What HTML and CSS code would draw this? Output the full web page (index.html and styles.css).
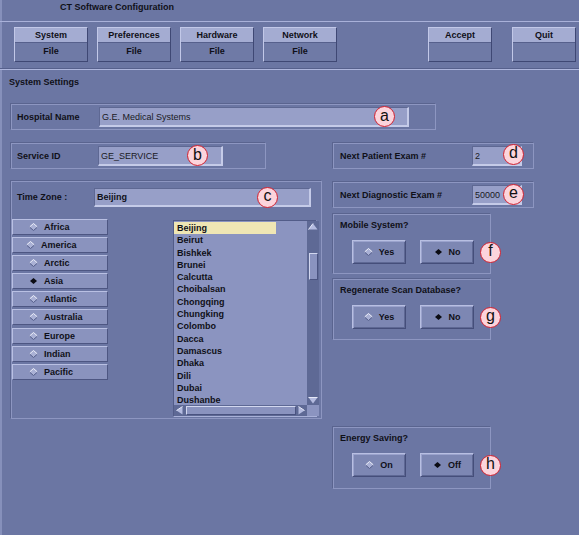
FILE: index.html
```html
<!DOCTYPE html>
<html>
<head>
<meta charset="utf-8">
<title>CT Software Configuration</title>
<link rel="stylesheet" href="styles.css">
</head>
<body>
<div class="screen">
  <div class="titlebar">CT Software Configuration</div>
  <div class="toolbar">
    <div class="tbtn"><div class="tb-top">System</div><div class="tb-bot">File</div></div>
    <div class="tbtn"><div class="tb-top">Preferences</div><div class="tb-bot">File</div></div>
    <div class="tbtn"><div class="tb-top">Hardware</div><div class="tb-bot">File</div></div>
    <div class="tbtn"><div class="tb-top">Network</div><div class="tb-bot">File</div></div>
    <div class="tbtn narrow accept"><div class="tb-top">Accept</div><div class="tb-bot"></div></div>
    <div class="tbtn narrow quit"><div class="tb-top">Quit</div><div class="tb-bot"></div></div>
  </div>

  <div class="content">
    <div class="section-title">System Settings</div>

    <div class="group hospital">
      <span class="label lbl-hosp">Hospital Name</span>
      <div class="field f-hosp">G.E. Medical Systems<span class="badge b-a">a</span></div>
    </div>

    <div class="columns">
      <div class="col-left">
        <div class="group service">
          <span class="label lbl-svc">Service ID</span>
          <div class="field f-svc">GE_SERVICE<span class="badge b-b">b</span></div>
        </div>

        <div class="group timezone">
          <div class="tz-head">
            <span class="label lbl-tz">Time Zone :</span>
            <div class="field f-tz">Beijing<span class="badge b-c">c</span></div>
          </div>
          <div class="tz-body">
            <div class="regions">
              <div class="rbtn"><svg class="dia" width="9" height="8" viewBox="0 0 9 8"><polygon points="4.5,0.5 8.5,4 4.5,7.5 0.5,4" fill="#aab1d5"/><polyline points="0.5,4 4.5,0.5 8.5,4" fill="none" stroke="#eef0fa"/><polyline points="0.5,4 4.5,7.5 8.5,4" fill="none" stroke="#555e8a"/></svg>Africa</div>
              <div class="rbtn am"><svg class="dia" width="9" height="8" viewBox="0 0 9 8"><polygon points="4.5,0.5 8.5,4 4.5,7.5 0.5,4" fill="#aab1d5"/><polyline points="0.5,4 4.5,0.5 8.5,4" fill="none" stroke="#eef0fa"/><polyline points="0.5,4 4.5,7.5 8.5,4" fill="none" stroke="#555e8a"/></svg>America</div>
              <div class="rbtn"><svg class="dia" width="9" height="8" viewBox="0 0 9 8"><polygon points="4.5,0.5 8.5,4 4.5,7.5 0.5,4" fill="#aab1d5"/><polyline points="0.5,4 4.5,0.5 8.5,4" fill="none" stroke="#eef0fa"/><polyline points="0.5,4 4.5,7.5 8.5,4" fill="none" stroke="#555e8a"/></svg>Arctic</div>
              <div class="rbtn"><svg class="dia" width="9" height="8" viewBox="0 0 9 8"><polygon points="4.5,1 8,4 4.5,7 1,4" fill="#0c0c14"/></svg>Asia</div>
              <div class="rbtn"><svg class="dia" width="9" height="8" viewBox="0 0 9 8"><polygon points="4.5,0.5 8.5,4 4.5,7.5 0.5,4" fill="#aab1d5"/><polyline points="0.5,4 4.5,0.5 8.5,4" fill="none" stroke="#eef0fa"/><polyline points="0.5,4 4.5,7.5 8.5,4" fill="none" stroke="#555e8a"/></svg>Atlantic</div>
              <div class="rbtn"><svg class="dia" width="9" height="8" viewBox="0 0 9 8"><polygon points="4.5,0.5 8.5,4 4.5,7.5 0.5,4" fill="#aab1d5"/><polyline points="0.5,4 4.5,0.5 8.5,4" fill="none" stroke="#eef0fa"/><polyline points="0.5,4 4.5,7.5 8.5,4" fill="none" stroke="#555e8a"/></svg>Australia</div>
              <div class="rbtn"><svg class="dia" width="9" height="8" viewBox="0 0 9 8"><polygon points="4.5,0.5 8.5,4 4.5,7.5 0.5,4" fill="#aab1d5"/><polyline points="0.5,4 4.5,0.5 8.5,4" fill="none" stroke="#eef0fa"/><polyline points="0.5,4 4.5,7.5 8.5,4" fill="none" stroke="#555e8a"/></svg>Europe</div>
              <div class="rbtn"><svg class="dia" width="9" height="8" viewBox="0 0 9 8"><polygon points="4.5,0.5 8.5,4 4.5,7.5 0.5,4" fill="#aab1d5"/><polyline points="0.5,4 4.5,0.5 8.5,4" fill="none" stroke="#eef0fa"/><polyline points="0.5,4 4.5,7.5 8.5,4" fill="none" stroke="#555e8a"/></svg>Indian</div>
              <div class="rbtn"><svg class="dia" width="9" height="8" viewBox="0 0 9 8"><polygon points="4.5,0.5 8.5,4 4.5,7.5 0.5,4" fill="#aab1d5"/><polyline points="0.5,4 4.5,0.5 8.5,4" fill="none" stroke="#eef0fa"/><polyline points="0.5,4 4.5,7.5 8.5,4" fill="none" stroke="#555e8a"/></svg>Pacific</div>
            </div>

            <div class="listbox">
              <ul class="items">
                <li class="sel">Beijing</li>
                <li>Beirut</li>
                <li>Bishkek</li>
                <li>Brunei</li>
                <li>Calcutta</li>
                <li>Choibalsan</li>
                <li>Chongqing</li>
                <li>Chungking</li>
                <li>Colombo</li>
                <li>Dacca</li>
                <li>Damascus</li>
                <li>Dhaka</li>
                <li>Dili</li>
                <li>Dubai</li>
                <li>Dushanbe</li>
              </ul>
              <div class="vscroll">
                <svg class="arr" width="10" height="7" viewBox="0 0 10 7"><polygon points="5,0.5 9.5,6.5 0.5,6.5" fill="#b4bbe0"/><polyline points="0.5,6.5 5,0.5" fill="none" stroke="#e6e9f7"/></svg>
                <div class="vthumb"></div>
                <svg class="arr arr-down" width="10" height="7" viewBox="0 0 10 7"><polygon points="0.5,0.5 9.5,0.5 5,6.5" fill="#b4bbe0"/><polyline points="0.5,0.5 9.5,0.5" fill="none" stroke="#e6e9f7"/></svg>
              </div>
              <div class="hscroll">
                <svg class="harr" width="7" height="9" viewBox="0 0 7 9"><polygon points="0.5,4.5 6.5,0.5 6.5,8.5" fill="#b4bbe0"/><polyline points="0.5,4.5 6.5,0.5" fill="none" stroke="#e6e9f7"/></svg>
                <div class="hthumb"></div>
                <svg class="harr" width="7" height="9" viewBox="0 0 7 9"><polygon points="0.5,0.5 6.5,4.5 0.5,8.5" fill="#b4bbe0"/><polyline points="0.5,0.5 6.5,4.5" fill="none" stroke="#e6e9f7"/></svg>
              </div>
              <div class="corner"></div>
            </div>
          </div>
        </div>
      </div>

      <div class="col-right">
        <div class="group numbox">
          <span class="label grow">Next Patient Exam #</span>
          <div class="field f-num">2<span class="badge b-d">d</span></div>
        </div>
        <div class="group numbox second">
          <span class="label grow">Next Diagnostic Exam #</span>
          <div class="field f-num">50000<span class="badge b-e">e</span></div>
        </div>

        <div class="group togglebox mobile">
          <div class="tlabel">Mobile System?</div>
          <div class="trow">
            <div class="tbutton"><svg width="9" height="8" viewBox="0 0 9 8"><polygon points="4.5,0.5 8.5,4 4.5,7.5 0.5,4" fill="#aab1d5"/><polyline points="0.5,4 4.5,0.5 8.5,4" fill="none" stroke="#eef0fa"/><polyline points="0.5,4 4.5,7.5 8.5,4" fill="none" stroke="#555e8a"/></svg>Yes</div>
            <div class="tbutton"><svg width="9" height="8" viewBox="0 0 9 8"><polygon points="4.5,1 8,4 4.5,7 1,4" fill="#0c0c14"/></svg>No<span class="badge b-t">f</span></div>
          </div>
        </div>

        <div class="group togglebox regen">
          <div class="tlabel">Regenerate Scan Database?</div>
          <div class="trow">
            <div class="tbutton"><svg width="9" height="8" viewBox="0 0 9 8"><polygon points="4.5,0.5 8.5,4 4.5,7.5 0.5,4" fill="#aab1d5"/><polyline points="0.5,4 4.5,0.5 8.5,4" fill="none" stroke="#eef0fa"/><polyline points="0.5,4 4.5,7.5 8.5,4" fill="none" stroke="#555e8a"/></svg>Yes</div>
            <div class="tbutton"><svg width="9" height="8" viewBox="0 0 9 8"><polygon points="4.5,1 8,4 4.5,7 1,4" fill="#0c0c14"/></svg>No<span class="badge b-t">g</span></div>
          </div>
        </div>

        <div class="group togglebox energy">
          <div class="tlabel">Energy Saving?</div>
          <div class="trow">
            <div class="tbutton"><svg width="9" height="8" viewBox="0 0 9 8"><polygon points="4.5,0.5 8.5,4 4.5,7.5 0.5,4" fill="#aab1d5"/><polyline points="0.5,4 4.5,0.5 8.5,4" fill="none" stroke="#eef0fa"/><polyline points="0.5,4 4.5,7.5 8.5,4" fill="none" stroke="#555e8a"/></svg>On</div>
            <div class="tbutton"><svg width="9" height="8" viewBox="0 0 9 8"><polygon points="4.5,1 8,4 4.5,7 1,4" fill="#0c0c14"/></svg>Off<span class="badge b-t">h</span></div>
          </div>
        </div>
      </div>
    </div>
  </div>
</div>
</body>
</html>
```

FILE: styles.css
```css
* { box-sizing: border-box; }

html, body {
  margin: 0;
  padding: 0;
  background: #6b76a3;
}

.screen {
  width: 579px;
  height: 535px;
  overflow: hidden;
  background: #6b76a3;
  font-family: "Liberation Sans", Arial, sans-serif;
  font-size: 9px;
  font-weight: bold;
  color: #101018;
  box-shadow: inset 2px 0 0 #8690bb;
}

/* title bar */
.titlebar {
  height: 22px;
  padding-left: 60px;
  line-height: 15px;
  border-bottom: 1px solid #a9b1d9;
}

/* toolbar */
.toolbar {
  height: 48px;
  display: flex;
  align-items: flex-start;
  gap: 9px;
  padding: 5px 0 0 14px;
  border-bottom: 1px solid #aeb6dd;
  box-shadow: inset 0 -1px 0 #56608c;
}

.tbtn {
  width: 74px;
  height: 35px;
  display: flex;
  flex-direction: column;
  border: 1px solid;
  border-color: #c2c8e8 #3f4874 #3f4874 #c2c8e8;
  text-align: center;
}

.tbtn.narrow { width: 64px; }
.tbtn.accept { margin-left: 82px; }
.tbtn.quit { margin-left: 11px; }

.tb-top {
  height: 15px;
  line-height: 14px;
  background: #a4acd2;
  border-bottom: 1px solid #56608c;
}

.tb-bot {
  flex: 1;
  line-height: 17px;
  background: #6f7aa6;
}

/* content */
.content {
  padding: 7px 0 0 11px;
}

.section-title {
  height: 11px;
  line-height: 11px;
  margin-left: -2px;
}

.group {
  position: relative;
  border: 1px solid #8d96c1;
  box-shadow: -1px -1px 0 #5a648f;
}

.label {
  flex: none;
  line-height: 11px;
}

.field {
  position: relative;
  flex: none;
  height: 20px;
  line-height: 18px;
  padding-left: 2px;
  background: #979fc8;
  border-style: solid;
  border-width: 1px 2px 2px 1px;
  border-color: #5e6893 #c5cbe8 #c5cbe8 #5e6893;
  font-weight: normal;
  color: #1a1a24;
}

.badge {
  position: absolute;
  top: 50%;
  width: 21px;
  height: 21px;
  margin-top: -10.5px;
  border-radius: 50%;
  background: #fcd4dc;
  border: 1.5px solid #d3202e;
  display: flex;
  align-items: center;
  justify-content: center;
  font-size: 16px;
  font-weight: normal;
  line-height: 1;
  color: #111;
  padding-bottom: 2px;
}

/* hospital */
.hospital {
  margin-top: 16px;
  width: 425px;
  height: 26px;
  display: flex;
  align-items: center;
  padding-left: 5px;
}
.lbl-hosp { width: 82px; }
.f-hosp { width: 310px; }
.b-a { left: 274px; }

.columns {
  display: flex;
  align-items: flex-start;
  gap: 11px;
  margin-top: 13px;
}

.col-left { width: 311px; flex: none; }
.col-right { width: 201px; flex: none; }

/* service */
.service {
  width: 255px;
  height: 26px;
  display: flex;
  align-items: center;
  padding-left: 5px;
}
.lbl-svc { width: 81px; }
.f-svc { width: 125px; }
.b-b { left: 88px; }

/* time zone */
.timezone {
  margin-top: 12px;
  width: 311px;
  height: 238px;
  padding-top: 6px;
}

.tz-head {
  display: flex;
  align-items: center;
  height: 19px;
  padding-left: 5px;
}
.lbl-tz { width: 77px; }
.f-tz {
  width: 217px;
  height: 19px;
  line-height: 17px;
  font-weight: bold;
  color: #101018;
}
.b-c { left: 162px; }

.tz-body {
  display: flex;
  align-items: flex-start;
  margin-top: 12px;
}

.regions {
  width: 96px;
  display: flex;
  flex-direction: column;
  gap: 2.1px;
}

.rbtn {
  height: 16px;
  display: flex;
  align-items: center;
  gap: 6px;
  padding-left: 16px;
  background: #8a93be;
  border: 1px solid;
  border-color: #b9c0e3 #4d5682 #4d5682 #b9c0e3;
}
.rbtn.am { padding-left: 13px; }

.dia { flex: none; }

/* list box */
.listbox {
  margin: 1px 0 0 65px;
  width: 144px;
  height: 197px;
  display: grid;
  grid-template-columns: 1fr 12px;
  grid-template-rows: 1fr 11px;
  background: #8b94c0;
  border: 1px solid;
  border-color: #525c88 #a9b1d8 #a9b1d8 #525c88;
}

.items {
  list-style: none;
  margin: 0;
  padding: 1px 0 0 0;
  overflow: hidden;
}

.items li {
  height: 12.3px;
  line-height: 12.3px;
  padding-left: 3px;
  white-space: nowrap;
}

.items li.sel {
  width: 102px;
  background: #efe6b4;
}

.vscroll {
  display: flex;
  flex-direction: column;
  align-items: center;
  background: #5e6995;
  padding: 2px 0 1px;
}

.arr { flex: none; }
.arr-down { margin-top: auto; }

.vthumb {
  margin-top: 23px;
  width: 9px;
  height: 27px;
  background: #8a93bf;
  border: 1px solid;
  border-color: #d2d7ef #4a5380 #4a5380 #d2d7ef;
}

.hscroll {
  display: flex;
  align-items: center;
  gap: 2px;
  padding: 0 2px;
  background: #5e6995;
}

.harr { flex: none; }

.hthumb {
  width: 110px;
  height: 9px;
  margin-left: 1px;
  background: #8a93bf;
  border: 1px solid;
  border-color: #d2d7ef #4a5380 #4a5380 #d2d7ef;
}

.corner { background: #8b94c0; }

/* right column */
.numbox {
  width: 201px;
  height: 26px;
  display: flex;
  align-items: center;
  padding: 0 11px 0 6px;
}
.numbox.second { margin-top: 13px; }
.grow { flex: 1; }
.f-num { width: 50px; }
.b-d { left: 30px; margin-top: -12px; }
.b-e { left: 30px; margin-top: -11px; }

.togglebox {
  width: 158px;
  padding: 5px 0 0 6px;
}
.mobile { margin-top: 6px; height: 60px; }
.regen { margin-top: 5px; height: 61px; }
.energy { margin-top: 87px; height: 62px; }

.tlabel {
  height: 11px;
  line-height: 11px;
}

.trow {
  display: flex;
  gap: 14px;
  margin-top: 9px;
  padding-left: 12px;
}

.tbutton {
  position: relative;
  width: 54px;
  height: 24px;
  display: flex;
  align-items: center;
  justify-content: center;
  gap: 6px;
  background: #7d87b3;
  border: 1px solid;
  border-color: #b8bfe2 #454e7a #454e7a #b8bfe2;
  box-shadow: inset 1px 1px 0 #9ba3cd, inset -1px -1px 0 #5e6894;
}

.b-t { left: 59px; }
```
